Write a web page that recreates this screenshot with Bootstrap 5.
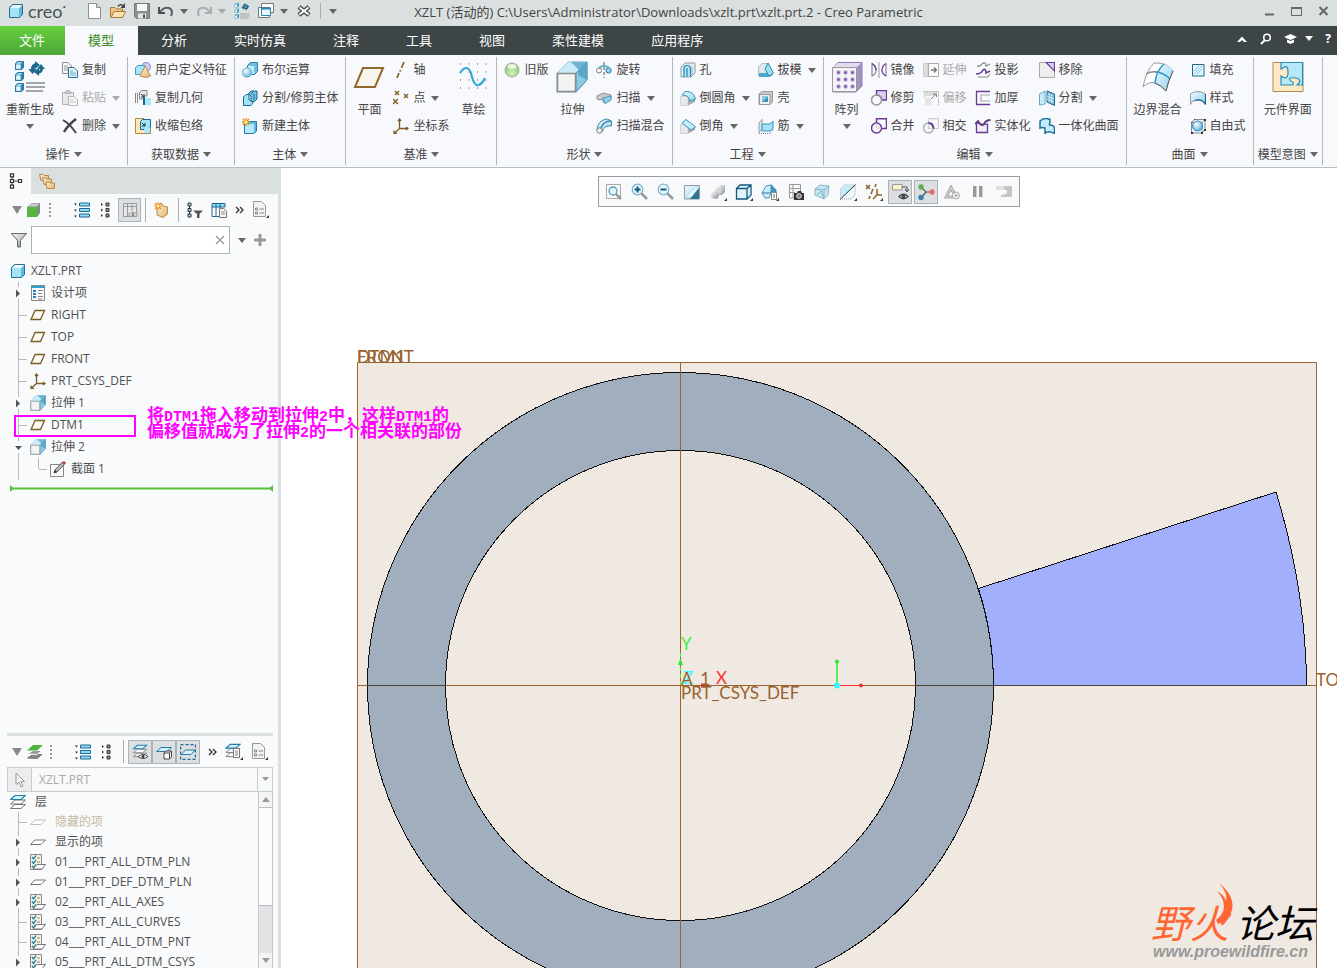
<!DOCTYPE html>
<html lang="zh-CN">
<head>
<meta charset="utf-8">
<meta name="viewport" content="width=device-width, initial-scale=1">
<title>XZLT - Creo Parametric</title>
<link rel="stylesheet" href="https://cdn.jsdelivr.net/npm/bootstrap@5.3.0/dist/css/bootstrap.min.css">
<style>
body{font-family:"Open Sans","Noto Sans CJK SC",sans-serif;font-size:12px;line-height:16px;color:#444;background:#fff}
button,input,select{font:inherit;color:inherit}
svg{display:block;flex:none}
.iconset{position:absolute;width:0;height:0}
.i16{width:16px;height:16px}
.i32{width:32px;height:32px}
.tb{display:flex;align-items:center;padding:0;border:0;border-radius:0;background:none;font-size:12px;line-height:16px;color:#444;white-space:nowrap}
.tb:disabled{opacity:1;color:#aaa;border:0}
.cr{width:0;height:0;border:4px solid transparent;border-top:5px solid #666;border-bottom:0;flex:none}
.tb:disabled .cr{border-top-color:#aaa}
/* title bar */
.titlebar{height:26px;background:#dadfdf;position:relative}
.titlebar h1{font-size:13px;line-height:25px;margin:0;color:#444;font-weight:400}
.caption-text{left:0;right:0;top:0;pointer-events:none}
.logo{font-family:Lato,sans-serif;font-size:18px;line-height:20px;color:#4a5152;margin-right:20px}
.quick{gap:8px}
.quick .tb{gap:6px}
.vsep{width:1px;background:#aab0b0}
/* tabs */
.tabs{height:29px;background:#3d4546}
.tabs .tabbtn{border:0;border-radius:0;background:none;color:#fff;font-size:13px;line-height:29px;padding:0 24px 0 23px;white-space:nowrap}
.tabs .filetab{background:linear-gradient(#66cf3f,#4fa839);padding:0 20px 0 19px}
.tabs .current{background:#f8f9fc;color:#3d8b28}
.tabs .cr{border-top-color:#fff}
.tabtools{padding:0 6px 4px 0}
/* ribbon */
.ribbon{height:113px;background:#f8f9fc;border-bottom:1px solid #b4bfbf;padding:2px 0}
.rgroup{border-right:1px solid #b3b8bb;display:flex;flex-direction:column;justify-content:space-between}
.rgroup .cols{display:flex;gap:8px;padding:0 7px}
.rgroup:first-child .cols{padding-left:6px}
.rcol{display:flex;flex-direction:column}
.rcol .tb{height:28px;gap:4px;padding-bottom:2px}
.rcol .tb .cr{margin-left:2px}
.big{flex-direction:column;padding-top:4px;gap:2px;height:84px;justify-content:flex-start}
.big .lbl{line-height:18px;margin-top:6px;padding:0}
.big .cr{margin-top:3px}
.glabel{justify-content:center;gap:4px;height:21px}
/* left panel */
.side{width:281px;background:#f8fafc;border-right:3px solid #dadfdf;flex:none}
.sidetabs{height:26px;background:#dadfdf}
.sidetabs .on{background:#f8fafc}
.sidetabs .tb{width:31px;justify-content:center}
.tools{height:32px}
.tools .tb{height:24px}
.on24{width:24px;justify-content:center;background:#dcdfe1;border:1px solid #aeb2b4}
.findbox{width:199px;height:28px;border:1px solid #a9b5b5;background:#fff}
.findbox input{border:0;outline:0;min-width:0;background:none;padding:0 4px}
.tree{list-style:none;margin:0;padding:0;color:#505050}
.modeltree{padding-top:6px}
.tree li{display:flex;align-items:center;height:22px;padding-left:14px;position:relative;white-space:nowrap}
.tree.short li{height:20px}
.tree .top{padding-left:10px}
.tree .txt{margin-left:5px}
.tree.short .txt{margin-left:9px}
.tree .hid{color:#c4baa0}
.gd{width:16px;align-self:stretch;flex:none;position:relative;background:linear-gradient(#b8b8b8,#b8b8b8) 4px 0/1px 100% no-repeat}
.gd.st{background:linear-gradient(#b8b8b8,#b8b8b8) 4px 0/1px 100% no-repeat,linear-gradient(#b8b8b8,#b8b8b8) 5px 50%/8px 1px no-repeat}
.gd.half{background:linear-gradient(#b8b8b8,#b8b8b8) 4px 0/1px 50% no-repeat,linear-gradient(#b8b8b8,#b8b8b8) 5px 50%/8px 1px no-repeat}
.gd svg{position:absolute;left:0;top:50%;margin-top:-6px;background:#f8fafc;width:10px;height:12px}
.pick{position:absolute;left:14px;top:1px;width:122px;height:22px;border:2px solid #f0f}
.tree li.insert{height:7px;margin:5px 5px 0 10px;padding:0}
.insert svg{width:100%;height:7px}
.layers{height:235px;border-top:3px solid #dadfdf;margin:0 5px 0 7px;flex:none}
.combo{height:25px;border:1px solid #c9cccf;color:#aaa;background:#f8f9fa}
.combo .arrow{width:24px;background:#ebedee;border-right:1px solid #c9cccf}
.combo select{appearance:none;border:0;background:none;color:#aaa;opacity:1;padding:0 7px}
.combo .drop{width:15px;border-left:1px solid #c9cccf}
.layerlist{min-height:0;margin-left:-7px}
.sbar{width:15px;background:#e1e3e5;border:1px solid #c5c8ca;border-top:0;border-bottom:0}
.sbar .end{height:15px;background:#f3f5f6}
.thumb{height:99px;background:#fbfcfd;border:1px solid #b8bcbe;border-width:1px 0}
/* graphics */
.work{min-height:0}
.viewbar{top:8px;left:50%;transform:translateX(-50%);background:#f7f9fb;border:1px solid #999ca0;padding:3px 2px;height:31px}
.viewbar .tb{width:24px;height:24px;margin:0 1px;justify-content:center}
.viewbar .on24{background:#dcdfe1;border:1px solid #aeb2b4}
.note{left:147px;top:238px;color:#f0f;font:bold 17px/16px "Noto Sans CJK SC",sans-serif;white-space:nowrap}
.note div{height:16px}
.note span{font-family:"Liberation Mono",monospace;font-size:15px;line-height:14px}
.model text{font-family:Lato,"Liberation Sans",sans-serif;font-size:17px}
.model .mark-cn{font:italic 400 39px "Noto Sans CJK SC",sans-serif}
.model .mark-url{font:italic bold 16px "Liberation Sans",sans-serif}
</style>
</head>
<body class="vh-100 overflow-hidden d-flex flex-column">
<svg class="iconset" aria-hidden="true">
<defs>
<linearGradient id="gb" x1="0" y1="0" x2="1" y2="1"><stop offset="0" stop-color="#effaff"/><stop offset="1" stop-color="#8fd3ee"/></linearGradient>
<linearGradient id="gy" x1="0" y1="0" x2="1" y2="1"><stop offset="0" stop-color="#fff2d8"/><stop offset="1" stop-color="#e0b468"/></linearGradient>
<linearGradient id="gg" x1="0" y1="0" x2="1" y2="1"><stop offset="0" stop-color="#fff"/><stop offset="1" stop-color="#8a8e92"/></linearGradient>
<radialGradient id="gs" cx=".5" cy=".75" r=".7"><stop offset="0" stop-color="#d4f5bf"/><stop offset="1" stop-color="#86bd68"/></radialGradient>
<radialGradient id="gbs" cx=".4" cy=".35" r=".65"><stop offset="0" stop-color="#fff"/><stop offset="1" stop-color="#5db4da"/></radialGradient>
</defs>
<symbol id="cube" viewBox="0 0 16 16"><path d="M1.500 4.500L4.500 1.500H14.500V11.500L11.500 14.500H1.500Z" fill="#5fb9de" stroke="#2a6f92"/><path d="M2 5L5 2H14L11.500 5Z" fill="#e9f8fe"/><path d="M2 5H11V14H2Z" fill="#a5e3f8"/></symbol>
<symbol id="minicube" viewBox="0 0 8 8"><path d="M.5 2.500L2.500.5H7.500V5.500L5.500 7.500H.5Z" fill="#2a86b4" stroke="#2a7ba5"/><path d="M1 3H5V7H1Z" fill="#e4f6fd"/><path d="M1 2.500L2.500 1H6.500L5 2.500Z" fill="#c6ecfb"/></symbol>
<symbol id="newf" viewBox="0 0 16 16"><path d="M2.500.5H10.500L14.500 4.500V15.500H2.500Z" fill="#fff" stroke="#8b8f92"/><path d="M10.500.5V4.500H14.500" fill="#ddd" stroke="#8b8f92"/></symbol>
<symbol id="open" viewBox="0 0 16 16"><path d="M.5 13.500V4.500H5L6.500 6H12.500V14.500H1.500Z" fill="#eec786" stroke="#a97a35"/><path d="M1 14.500L4 8.500H15.500L12.500 14.500Z" fill="#ffe3ae" stroke="#a97a35"/><path d="M8 3.500Q10 .5 13 2.500" fill="none" stroke="#444" stroke-width="1.500"/><path d="M15 0V5H10.500Z" fill="#444"/></symbol>
<symbol id="save" viewBox="0 0 16 16"><path d="M.5.5H15.500V15.500H2.500L.5 13.500Z" fill="#8c9093" stroke="#777"/><path d="M3 1H13V8H3Z" fill="#f7f7f7"/><path d="M4 10.500H12V15.500H4Z" fill="#e4e6e8"/><path d="M9 11.500H11V15H9Z" fill="#555"/></symbol>
<symbol id="undo" viewBox="0 0 16 16"><path d="M1 4V10H7" fill="none" stroke="#4b4f52" stroke-width="2"/><path d="M2 9Q6 3.500 11 5Q15.500 7 13 13" fill="none" stroke="#5c6063" stroke-width="2"/></symbol>
<symbol id="redo" viewBox="0 0 16 16"><path d="M15 4V10H9" fill="none" stroke="#a9adaf" stroke-width="2"/><path d="M14 9Q10 3.500 5 5Q.5 7 3 13" fill="none" stroke="#a9adaf" stroke-width="2"/></symbol>
<symbol id="regen" viewBox="0 0 32 32"><use href="#minicube" x="1" y="0" width="9" height="9"/><use href="#minicube" x="1" y="11" width="9" height="9"/><use href="#minicube" x="1" y="22" width="9" height="9"/><path d="M12 22H31M12 26H31M12 30H29" stroke="#a3a6a8" stroke-width="2"/><path d="M14.500 8H23L18.500 13ZM17 8Q17 3 22 2V5Q20.500 6 20.500 8Z" fill="#1d698e"/><path d="M21 0L26 4L21 8Z" fill="#1d698e"/><path d="M23 8H31L27 3ZM29 8Q29 12 24 13V10Q26 10 26 8Z" fill="#1d698e"/><path d="M25 7V15L20 11Z" fill="#1d698e"/></symbol>
<symbol id="wins" viewBox="0 0 16 16"><path d="M3.500.5H15.500V9.500H3.500Z" fill="#fff" stroke="#777"/><path d="M.5 4.500H11.500V14.500H.5Z" fill="#f5fbfe" stroke="#777"/><path d="M3.500 5.500H12.500V12.500H3.500Z" fill="#e6f6fd" stroke="#2e85ad"/><path d="M3 5.500H13" stroke="#2e85ad" stroke-width="2"/></symbol>
<symbol id="closew" viewBox="0 0 16 16"><path d="M3 4L13 12M13 4L3 12" stroke="#444" stroke-width="4.500"/><path d="M3.500 4.500L12.500 11.500M12.500 4.500L3.500 11.500" stroke="#fff" stroke-width="2"/></symbol>
<symbol id="copy" viewBox="0 0 16 16"><path d="M.5.500H6L9.500 4V11.500H.5Z" fill="#f7f7f7" stroke="#8c8c8c"/><path d="M2 4H6M2 6H6M2 8H6" stroke="#999"/><path d="M6.500 5.500H12L15.500 9V15.500H6.500Z" fill="#e6f6fd" stroke="#2a6f92"/><path d="M8 9H11M8 11H14M8 13H14" stroke="#6ba9c6"/></symbol>
<symbol id="paste" viewBox="0 0 16 16"><path d="M.5 2.500H11.500V14.500H.5Z" fill="#e8e8e8" stroke="#b5b5b5"/><path d="M3 3.500Q3 .5 6 .5T9 3.500Z" fill="#ccc" stroke="#b5b5b5"/><path d="M6.500 6.500H12L15.500 10V15.500H6.500Z" fill="#f8f8f8" stroke="#b5b5b5"/><path d="M8 10H11M8 12H14" stroke="#c4c4c4"/></symbol>
<symbol id="del" viewBox="0 0 16 16"><path d="M1 2Q8 6 14 15" fill="none" stroke="#444" stroke-width="2"/><path d="M14 1Q6 7 2 14" fill="none" stroke="#444" stroke-width="2.500"/></symbol>
<symbol id="udf" viewBox="0 0 16 16"><circle cx="11" cy="5" r="4.500" fill="#c9cff2" stroke="#7d88c9"/><path d="M.5 5.500L2.500 3.500H9.500V10.500L7.500 12.500H.5Z" fill="#a5e3f8" stroke="#4b9bc0"/><path d="M10 4L15.500 14Q11 17 5 14Z" fill="url(#gy)" stroke="#b98f50"/></symbol>
<symbol id="cpgeo" viewBox="0 0 16 16"><path d="M.5 3V13M2.500 3V13" stroke="#888"/><path d="M4.500 3L6.500.5H12V6H9V9H4.500Z" fill="#e8e8e8" stroke="#888"/><path d="M6 4L9 7M9 4V7H6" fill="none" stroke="#333"/><path d="M8 7H10V15H8Z" fill="#1d698e"/><path d="M10 8H16V15H10Z" fill="#a5e9fb"/></symbol>
<symbol id="shrink" viewBox="0 0 16 16"><path d="M.5.500H9V10H15.500V15.500H.5Z" fill="#ffe7b8" stroke="#b08a4a"/><path d="M5.500 3.500L7.500 1.500H15.500V9L13.500 11.500H5.500Z" fill="#a5e3f8" stroke="#1d698e"/><path d="M7 5L10 8M10 5V8H7" fill="none" stroke="#222"/><path d="M9 10H15V15H9Z" fill="#a5e9fb"/></symbol>
<symbol id="boolb" viewBox="0 0 16 16"><path d="M5.500 3.500L8.500.5H15.500V9.500L12.500 12.500H5.500Z" fill="#6fc1e2" stroke="#2a7ba5"/><path d="M6 4H12V12H6Z" fill="#c6edfb"/><circle cx="5" cy="10.500" r="4.800" fill="url(#gbs)" stroke="#7fb3cc"/></symbol>
<symbol id="split" viewBox="0 0 16 16"><path d="M1.500 7L4 4.500H7V10H11V13L9 15.500H1.500Z" fill="#a5e3f8" stroke="#1d698e"/><path d="M6.500 3.500L9 1H15V9L12.500 11.500H9V6Z" fill="#71c4e6" stroke="#1d698e"/><path d="M9 4L11 2M12 4V10" stroke="#1d698e"/></symbol>
<symbol id="nbody" viewBox="0 0 16 16"><path d="M2.500 5.500L5 3.500H14.500V13L12 15.500H2.500Z" fill="#5fb9de" stroke="#2a7ba5"/><path d="M3 6H12V15H3Z" fill="#b4ebfb"/><path d="M4 0V8M0 4H8M1 1L7 7M7 1L1 7" stroke="#e88b1a" stroke-width="1.300"/><circle cx="4" cy="4" r="1.700" fill="#fff3a8"/></symbol>
<symbol id="plane32" viewBox="0 0 32 32"><path d="M10 7H30L22 26H2Z" fill="#f8f5ef" stroke="#92692a" stroke-width="2"/></symbol>
<symbol id="axis" viewBox="0 0 16 16"><path d="M11 0L8.500 6M7.500 8L7 9.500M6 11L4 16" stroke="#8c682c" stroke-width="1.800"/></symbol>
<symbol id="point" viewBox="0 0 16 16"><path d="M2 1L6 5M6 1L2 5M11 4L15 8M15 4L11 8M0 9L5 14M5 9L0 14" stroke="#8c682c" stroke-width="1.600"/></symbol>
<symbol id="csys" viewBox="0 0 16 16"><path d="M6.500 1V10.500H15M6.500 10.500L1.500 15M5 3L6.500 1L8 3M13 9L15 10.500L13 12M1 12.500V15.500H4" fill="none" stroke="#7c5c26" stroke-width="1.300"/></symbol>
<symbol id="sketch32" viewBox="0 0 32 32"><path d="M3 3H30M3 11H30M3 19H30M3 27H30" stroke="#555" stroke-dasharray="1 7.500"/><path d="M3 12Q10 2 14 12Q17 26 22 24Q26 22 28 17" fill="none" stroke="#35a9dc" stroke-width="2.200"/></symbol>
<symbol id="legacy" viewBox="0 0 16 16"><circle cx="8" cy="8" r="7" fill="url(#gs)" stroke="#a9ada6"/><ellipse cx="8" cy="4.500" rx="4.500" ry="2.500" fill="#eaf8e2"/></symbol>
<symbol id="extr" viewBox="0 0 32 32"><path d="M1 12L12 1H31V19L20 31H1Z" fill="#b6e4f5" stroke="#77aabf"/><path d="M12 1H31V19H20V12H12Z" fill="#5ca6c8"/><path d="M12 1H31L20 12H1Z" fill="#c8ebf8"/><path d="M15 1H31L23 9Z" fill="#6db3d2"/><path d="M20 12L31 1V19L20 31Z" fill="#8ccbe4" stroke="#4f97b8"/><path d="M31 1V19L22 14V10Z" fill="#5ca6c8"/><path d="M1.500 12.500H19.500V30.500H1.500Z" fill="#f3f3f3" stroke="#8c8c8c" stroke-width="1.500"/></symbol>
<symbol id="revolve" viewBox="0 0 16 16"><path d="M8 0V16" stroke="#555" stroke-dasharray="3 2"/><circle cx="3" cy="8.500" r="2.500" fill="#fff" stroke="#777"/><circle cx="12.500" cy="8.500" r="2.700" fill="#8fd3ee" stroke="#2a7ba5"/><path d="M3 5.500Q8 2.500 13 5.500" fill="none" stroke="#5faecb" stroke-width="2"/></symbol>
<symbol id="sweep" viewBox="0 0 16 16"><path d="M1 6L7 3L15 5V9L9 13L7 12V9L3 10L1 9Z" fill="#c6cacd" stroke="#8c8f92"/><path d="M7 8L15 6V10L9 13.500Z" fill="#8fd3ee" stroke="#4f97b8"/></symbol>
<symbol id="swbl" viewBox="0 0 16 16"><path d="M1 12Q2 2 11 1L15.500 3V8Q8 7 6 14Z" fill="url(#gb)" stroke="#3f88a8"/><path d="M5 10Q7 3 15 3" fill="none" stroke="#3f88a8" stroke-width="1.500"/><circle cx="3.500" cy="12.500" r="2.700" fill="#f3f3f3" stroke="#777"/></symbol>
<symbol id="hole" viewBox="0 0 16 16"><path d="M1 5L5 1H15V11L11 15H1Z" fill="#e4eef2" stroke="#999"/><path d="M4 15V6Q4 3.500 7 3.500T10.500 6V15M7 6V15" fill="#b5e4f5" stroke="#2387b5" stroke-width="1.200"/><path d="M12 5V13" stroke="#8ab9cf"/></symbol>
<symbol id="round" viewBox="0 0 16 16"><path d="M.5 6.500H8V15.500H.5Z" fill="#e9e9e9" stroke="#d2d2d2"/><path d="M8 15.500V6.500L15 8V12Z" fill="#a9aeb2"/><path d="M5 1.500Q14 1 15.500 9L10 11Q9 5 2 5Z" fill="url(#gb)" stroke="#3793ba"/></symbol>
<symbol id="chamfer" viewBox="0 0 16 16"><path d="M.5 6.500H8V15.500H.5Z" fill="#e9e9e9" stroke="#d2d2d2"/><path d="M8 15.500V8L15 9V12Z" fill="#a9aeb2"/><path d="M6 1.500L15.500 9L11 12L2 5Z" fill="#c5effb" stroke="#3793ba"/></symbol>
<symbol id="draft" viewBox="0 0 16 16"><path d="M.5 5L4 1.500H10L15 12L11 14H.5Z" fill="#dfe8ec" stroke="#b5bfc3"/><path d="M1 11H11L15 13L11 15H1Z" fill="#4aa7d0"/><path d="M10 1L15.500 11L11 14L7 7Z" fill="#9edcf2" stroke="#2a8ab5"/></symbol>
<symbol id="shell" viewBox="0 0 16 16"><path d="M1 4L4 1.500H14.500V12L12 14.500H1Z" fill="#c6cacc" stroke="#999"/><path d="M1.500 4.500H12V14.500H1.500Z" fill="#eee" stroke="#999"/><path d="M4 6.500H10V12H4Z" fill="#3f93bd"/><path d="M4 6.500H10L4 12Z" fill="#85cbe8"/></symbol>
<symbol id="rib" viewBox="0 0 16 16"><path d="M1 5L4 1.500V11L1 14.500Z" fill="#dbeef5" stroke="#999"/><path d="M4 6L12 6L15 3V11L12 13H4Z" fill="#a5e3f8" stroke="#3793ba"/><path d="M1 15.500H12L15 12" fill="none" stroke="#888" stroke-dasharray="1 1"/></symbol>
<symbol id="patt" viewBox="0 0 32 32"><path d="M2 7L7 1.500H31V25L25 31H2Z" fill="#a592c4" stroke="#8c7ab0"/><path d="M3 6L7 2H30L26 6Z" fill="#e3dcf0"/><path d="M1.500 6.500H25.500V30.500H1.500Z" fill="#f4f3f7" stroke="#999"/><path d="M6 10h3v3h-3zM13 10h3v3h-3zM20 10h3v3h-3zM6 17h3v3h-3zM13 17h3v3h-3zM20 17h3v3h-3zM6 24h3v3h-3zM13 24h3v3h-3zM20 24h3v3h-3z" fill="#6b429a" stroke="#b9a6d3"/></symbol>
<symbol id="mirror" viewBox="0 0 16 16"><path d="M1 14.500V1.500Q5 4 5 8T1 14M15 14.500V1.500" fill="none" stroke="#8a8494" stroke-width="1.200"/><path d="M15 1.500Q11 4 11 8T15 14" fill="none" stroke="#693b94" stroke-width="1.300"/><path d="M1 1.500Q5 4 5 8" fill="none" stroke="#693b94" stroke-width="1.300"/><path d="M8 0V16" stroke="#999"/></symbol>
<symbol id="trim" viewBox="0 0 16 16"><path d="M5.500.5H15.500V10H11Q10 5 5.500 5Z" fill="#dccff2" stroke="#693b94" stroke-width="1.300"/><circle cx="5.500" cy="10" r="5" fill="none" stroke="#999" stroke-width="1.500"/></symbol>
<symbol id="merge" viewBox="0 0 16 16"><path d="M5.500 5V.7H15.500V10.500H10.500" fill="none" stroke="#693b94" stroke-width="1.500"/><circle cx="5.500" cy="10" r="5" fill="none" stroke="#693b94" stroke-width="1.500"/><path d="M5.500 5V10H10.500" fill="none" stroke="#ccc"/></symbol>
<symbol id="inter" viewBox="0 0 16 16"><path d="M5.500.7H15.500V10.500H10.500M5.500.7V10.500H10.500" fill="none" stroke="#ccc" stroke-width="1.200"/><circle cx="5.500" cy="10" r="5" fill="none" stroke="#aaa" stroke-width="1.300"/><path d="M5.500 5Q10 5 10.500 10.500" fill="none" stroke="#693b94" stroke-width="2"/></symbol>
<symbol id="extend" viewBox="0 0 16 16"><path d="M.5 1.500H5V14.500H.5Z" fill="#ddd" stroke="#ccc"/><path d="M5.500 1.500H15.500V14.500H5.500Z" fill="#fafafa" stroke="#aaa"/><path d="M8 8H13M11 5.500L13.500 8L11 10.500" fill="none" stroke="#777" stroke-width="1.300"/></symbol>
<symbol id="offs" viewBox="0 0 16 16"><path d="M.5 1.500H15.500V15" fill="none" stroke="#aaa" stroke-dasharray="2 1"/><path d="M.5 2H14V6H4L.5 8Z" fill="#ddd"/><path d="M2 8H8V15.500H2Z" fill="#e4e4e4"/><path d="M8 9L13 4M10 4H13.500V7" fill="none" stroke="#888"/></symbol>
<symbol id="proj" viewBox="0 0 16 16"><path d="M2 4Q5 5 7 2Q11-1 11 4L15 2" fill="none" stroke="#888" stroke-width="1.300"/><path d="M1 12Q6 12 8 8Q11 6 11 11L15 9" fill="none" stroke="#693b94" stroke-width="1.600"/><path d="M3 15H13L15 12" fill="none" stroke="#888"/></symbol>
<symbol id="thick" viewBox="0 0 16 16"><path d="M15 1.500H1.500V14.500H15" fill="none" stroke="#693b94" stroke-width="1.300"/><path d="M15 5H6V11H15" fill="none" stroke="#aaa" stroke-width="1.200"/></symbol>
<symbol id="solid" viewBox="0 0 16 16"><path d="M1.500 6V14.500H12.500V6Q6 8 3 4Z" fill="#f0ebf8" stroke="#693b94" stroke-width="1.300"/><path d="M0 6L3 3Q6 9 9 6Q11 2 15.500 2" fill="none" stroke="#5a3d80" stroke-width="1.800"/></symbol>
<symbol id="remv" viewBox="0 0 16 16"><path d="M.5.5H15.500V15.500H.5Z" fill="#eee" stroke="#aaa"/><path d="M7 .5H15.500V9Z" fill="#ddccf3" stroke="#693b94" stroke-width="1.200"/></symbol>
<symbol id="divd" viewBox="0 0 16 16"><path d="M.5 4L6 1V14L.5 15Z" fill="#c5ecfa" stroke="#6aa8c2"/><path d="M8 1L15.500 4V15.500L8 12Z" fill="#7fc2dd" stroke="#1d698e"/><path d="M10 4V12M12.500 5V13M8 6L15 9M8 9L15 12" stroke="#fff" stroke-dasharray="1 1"/></symbol>
<symbol id="unify" viewBox="0 0 16 16"><path d="M1 3Q5-1 11 1.500L10.500 7Q15 7 15.500 10V15.500Q9 12 6 15.500V10Q3 9 1 10Z" fill="#c5ecfa" stroke="#1f6f98" stroke-width="1.500"/></symbol>
<symbol id="bound" viewBox="0 0 32 32"><path d="M12 2Q4 10 1 26Q7 20 13 22Q19 24 24 30Q26 20 31 10Q25 1 12 2Z" fill="#fff" stroke="#999"/><path d="M22 3Q14 10 13 22Q19 24 24 30Q26 20 31 10Q28 5 22 3Z" fill="url(#gb)"/><path d="M22 3Q14 10 13 22M13 11Q21 11 28 18" fill="none" stroke="#2c99c9" stroke-width="1.600"/><path d="M13 22Q19 24 24 30Q26 20 31 10" fill="none" stroke="#555"/><path d="M4 13Q9 10 16 11" fill="none" stroke="#888" stroke-width="1.300"/></symbol>
<symbol id="fillp" viewBox="0 0 16 16"><path d="M2.500 2.500H14V14H2.500Z" fill="#dff4fc" stroke="#1d698e"/><path d="M4 9L9 4M4 12L12 4M7 12L12 7" stroke="#8cc9e4"/></symbol>
<symbol id="style" viewBox="0 0 16 16"><path d="M.5 4Q8-1 15.500 4V14.500Q14 10 8 10T.5 14.500Z" fill="url(#gb)" stroke="#999"/><path d="M4.500 10.500Q12 8 15.500 14.500V4" fill="none" stroke="#1d698e" stroke-width="1.300"/></symbol>
<symbol id="free" viewBox="0 0 16 16"><path d="M1.500 4.500H12V15H1.500ZM4.500 1.500H15V11.500L12 15M4.500 1.500L1.500 4.500M15 1.500L12 4.500" fill="none" stroke="#888"/><circle cx="7.500" cy="8" r="5" fill="url(#gbs)" stroke="#2a8ab5"/><path d="M1 4h1v1H1zM4 1h1v1H4zM14 1h2v2h-2zM14 11h2v2h-2zM1 14h2v2H1zM11 14h2v2h-2z" fill="#333"/></symbol>
<symbol id="comp" viewBox="0 0 32 32"><path d="M1 1.500H31V30.500H1Z" fill="#fde9c4" stroke="#b48a4e"/><path d="M9 1.500H30.500V24H25Q31 19 24 17Q16 16 18 19Q18 20 21 21V24H9V15Q16 20 16 11Q16 3 11 7L9 8Z" fill="#b6e8f8" stroke="#2d8fb8" stroke-width="1.200"/></symbol>
<!-- side panel icons -->
<symbol id="ttree" viewBox="0 0 16 16"><path d="M4 2V14M4 8H12" stroke="#444"/><path d="M2.500.8h3v3h-3zM2.500 6.500h3v3h-3zM2.500 12.200h3v3h-3zM10.500 6.500h3v3h-3z" fill="#fff" stroke="#333" stroke-width="1.200"/></symbol>
<symbol id="folders" viewBox="0 0 16 16"><g fill="url(#gy)" stroke="#b58b4e"><path d="M.5 1.500H4L5 2.500H9.500V7.500H2Z"/><path d="M3.500 5H7L8 6H12.500V11.500H5Z"/><path d="M7 9H10L11 10H15.500V15.500H8Z"/></g></symbol>
<symbol id="gcube" viewBox="0 0 16 16"><path d="M1 5L6 1H14V11L11 15H1Z" fill="#848b8e"/><path d="M1.500 5H11V15H1.500Z" fill="#55b83a"/><path d="M2 4.500L6 1.500H13.500L11 4.500Z" fill="#c9ccce"/></symbol>
<symbol id="lst" viewBox="0 0 16 16"><path d="M0 1.500H3L1.500 3.500ZM0 7.500H3L1.500 9.500ZM0 13.500H3L1.500 15.500Z" fill="#333"/><path d="M5.500 1h10v3h-10zM5.500 6.500h10v3h-10zM5.500 12h10v3h-10z" fill="#8fdcf8" stroke="#1d698e"/></symbol>
<symbol id="lst2" viewBox="0 0 16 16"><path d="M3 1L5 2.500L3 4ZM3 6.500L5 8L3 9.500ZM3 12L5 13.500L3 15Z" fill="#333"/><path d="M8 1h3v3H8zM8 6.500h3v3H8zM8 12h3v3H8z" fill="#999" stroke="#333"/></symbol>
<symbol id="dots" viewBox="0 0 4 16"><path d="M2 1V3M2 5V7M2 9V11M2 13V15" stroke="#999" stroke-width="2"/></symbol>
<symbol id="tcols" viewBox="0 0 16 16"><path d="M1.500 1.500H14.500V14.500H1.500ZM1.500 4.500H14.500M5.500 1.500V14.500M10 1.500V9" fill="#e4e6e8" stroke="#999"/><path d="M6 12.500Q11 8.500 16 12.500Q11 16.500 6 12.500Z" fill="#f3f3f3" stroke="#999"/><circle cx="11" cy="12.500" r="1.500" fill="#888"/></symbol>
<symbol id="newd" viewBox="0 0 16 16"><path d="M3 3L8 1.500L9 4L13.500 5V12L9 15.500L3 13Z" fill="url(#gy)" stroke="#b98c45"/><path d="M4 0V8M0 4H8M1 1L7 7M7 1L1 7" stroke="#e88b1a" stroke-width="1.200"/><circle cx="4" cy="4" r="1.500" fill="#fff3a8"/></symbol>
<symbol id="tfil" viewBox="0 0 16 16"><path d="M2.500 2V15" stroke="#333"/><path d="M1 1h3v3H1zM1 6.500h3v3H1zM1 12h3v3H1z" fill="#8fdcf8" stroke="#333"/><path d="M6 8.500H16L12.500 12V16H10V12Z" fill="#555"/></symbol>
<symbol id="tset" viewBox="0 0 16 16"><path d="M1 1.500H14V5H1Z" fill="#8fdcf8" stroke="#1d698e"/><path d="M1 5V14.500H8M5 1.500V14.500M9 1.500V6" fill="none" stroke="#1d698e"/><path d="M8.500 6.500H12.500L15.500 9V15.500H8.500Z" fill="#f5f5f5" stroke="#777"/><path d="M10 10H14M10 12H14" stroke="#888"/></symbol>
<symbol id="docl" viewBox="0 0 18 18"><path d="M1.500.5H9.500L13.500 4.500V15.500H1.500Z" fill="#f1f2f3" stroke="#999"/><path d="M3.500 7h2v2h-2zM3.500 11h2v2h-2zM7.500 8H12M7.500 12H12" fill="none" stroke="#888"/><path d="M17 14V17H14Z" fill="#333"/></symbol>
<symbol id="funnel" viewBox="0 0 16 16"><path d="M.5 1.500H15.500L9.500 8.500V15H6.500V8.500Z" fill="url(#gg)" stroke="#666"/></symbol>
<symbol id="ditem" viewBox="0 0 16 16"><path d="M1.500.5H14.500V15.500H1.500Z" fill="#f8f8f8" stroke="#888"/><path d="M1 2H15" stroke="#2aa0d0" stroke-width="2"/><path d="M3 5h3v2H3zM3 8h3v2H3zM3 11h3v2H3z" fill="#2387b5"/><path d="M8 5.500H13M8 8.500H12M8 11.500H13M8 14H12" stroke="#888"/></symbol>
<symbol id="pl" viewBox="0 0 16 16"><path d="M5 3.500H14.500L10.500 12.500H1Z" fill="#fdfaf4" stroke="#7c5c26" stroke-width="1.300"/></symbol>
<symbol id="sec" viewBox="0 0 16 16"><path d="M.5 3.500H13.500V15.500H.5Z" fill="#fafafa" stroke="#888"/><path d="M4 12L5 9L12 1.500L14 3.500L7 11Z" fill="#bbb" stroke="#555"/><path d="M12 1.500L14 0L16 2L14.500 3.500Z" fill="#c0362a"/><path d="M4 12L5 9L7 11Z" fill="#333"/></symbol>
<symbol id="ex" viewBox="0 0 10 12"><path d="M2 2.500L6 6.500L2 10.500Z" fill="#555"/></symbol>
<symbol id="exd" viewBox="0 0 10 12"><path d="M1 5H8L4.500 9Z" fill="#555"/></symbol>
<symbol id="glay" viewBox="0 0 16 16"><path d="M.5 14L6 10.500H15L10 14.500Z" fill="#888" stroke="#777"/><path d="M.5 10L6 6.500H15L10 10.500Z" fill="#999" stroke="#f8fafc"/><path d="M0 6.500L6 1H16L10 6.500Z" fill="#4fb536"/></symbol>
<symbol id="lay" viewBox="0 0 16 16"><path d="M.5 14.500L5 10.500H15.500L11 14.500Z" fill="#fff" stroke="#777"/><path d="M.5 10L5 6H15.500L11 10Z" fill="#fff" stroke="#777"/><path d="M.5 5.500L5 1.500H15.500L11 5.500Z" fill="#d8f1fb" stroke="#2380aa" stroke-width="1.200"/></symbol>
<symbol id="layeye" viewBox="0 0 16 16"><use href="#lay" width="16" height="14"/><path d="M6 12.500Q11 8.500 16 12.500Q11 16.500 6 12.500Z" fill="#fff" stroke="#444"/><circle cx="11" cy="12.500" r="1.500" fill="#333"/></symbol>
<symbol id="laycube" viewBox="0 0 16 16"><path d="M.5 7.500L5 3.500H15.500L11 7.500Z" fill="#d8f1fb" stroke="#2380aa"/><path d="M8 9L10 7H15.500V13L13.500 15H8ZM8 9H13.500V15M13.500 9L15.500 7" fill="#fff" stroke="#444"/></symbol>
<symbol id="layiso" viewBox="0 0 16 16"><path d="M.5.5H15.500V15.500H.5Z" fill="none" stroke="#1d698e" stroke-width="1.300" stroke-dasharray="3 2"/><path d="M1 10.500L5.500 6H15L11 10.500Z" fill="#d8f1fb" stroke="#2380aa"/></symbol>
<symbol id="layset" viewBox="0 0 18 18"><use href="#lay" width="16" height="15"/><path d="M8.500 5.500H14.500V14.500H8.500Z" fill="#fff" stroke="#777"/><path d="M10 8H13M10 10H13M10 12H13" stroke="#888"/><path d="M18 14V17H15Z" fill="#333"/></symbol>
<symbol id="lp" viewBox="0 0 16 16"><path d="M.5 10.500L5 6H15.500L11 10.500Z" fill="#fff" stroke="#777"/></symbol>
<symbol id="lph" viewBox="0 0 16 16"><path d="M.5 10.500L5 6H15.500L11 10.500Z" fill="#fff" stroke="#c4c0b4"/></symbol>
<symbol id="lc" viewBox="0 0 16 16"><path d="M.5.5H11.500V15.500H.5Z" fill="#fbf3dd" stroke="#888"/><path d="M2 3L3.500 5L6 1.500M2 7.500L3.500 9.500L6 6M2 12L3.500 14L6 10.500" fill="none" stroke="#2380aa" stroke-width="1.300"/><path d="M7 4H10M7 8H10" stroke="#888"/><path d="M3 15L7 10.500H15.500L12 15Z" fill="#fff" stroke="#777"/></symbol>
<symbol id="arr" viewBox="0 0 16 16"><path d="M4 1V12.500L7 10L9 15L11 14L9 9.500H12.500Z" fill="#f5f5f5" stroke="#999"/></symbol>
<!-- view toolbar icons -->
<symbol id="zfit" viewBox="0 0 18 18"><path d="M1.500 1.500H15.500V15.500H1.500Z" fill="#fafafa" stroke="#aaa"/><path d="M11 11L16 16" stroke="#999" stroke-width="2.500"/><circle cx="8" cy="8" r="4" fill="#dff3fb" stroke="#5a9cba" stroke-width="1.300"/></symbol>
<symbol id="zin" viewBox="0 0 18 18"><path d="M10 10L16 16" stroke="#999" stroke-width="2.500"/><circle cx="6.500" cy="6.500" r="5.300" fill="#e8f7fd" stroke="#7fb3cc" stroke-width="1.200"/><path d="M3.500 6.500H9.500M6.500 3.500V9.500" stroke="#14597e" stroke-width="2"/></symbol>
<symbol id="zout" viewBox="0 0 18 18"><path d="M10 10L16 16" stroke="#999" stroke-width="2.500"/><circle cx="6.500" cy="6.500" r="5.300" fill="#e8f7fd" stroke="#7fb3cc" stroke-width="1.200"/><path d="M3.500 6.500H9.500" stroke="#14597e" stroke-width="2"/></symbol>
<symbol id="repaint" viewBox="0 0 18 18"><path d="M1.500 2.500H16.500V16H1.500Z" fill="url(#gb)" stroke="#999"/><path d="M16 5V16H7Z" fill="#2d7898"/><path d="M5 14Q7 10 15 4L9 13Z" fill="#fff"/></symbol>
<symbol id="shade" viewBox="0 0 18 18"><path d="M8 5L11 2H16V9L13 12H8Z" fill="url(#gg)"/><circle cx="9" cy="8" r="3" fill="#d5d8da"/><circle cx="6" cy="12" r="4" fill="url(#gg)"/><path d="M18 15V18H15Z" fill="#333"/></symbol>
<symbol id="cubev" viewBox="0 0 18 18"><path d="M1.500 5.500L5 2H16V12L12 16H1.500ZM1.500 5.500H12V16M12 5.500L16 2" fill="#dff4fc" stroke="#14597e" stroke-width="1.300"/><path d="M18 15V18H15Z" fill="#333"/></symbol>
<symbol id="saved" viewBox="0 0 18 18"><path d="M1 10L5 3L10 2V10L8 15H4Z" fill="#c8ecf8" stroke="#4f97b8"/><path d="M10 1L15.500 7V10H10Z" fill="#3f93bd"/><path d="M1 10H10" stroke="#2a7ba5"/><path d="M10.500 9.500H15.500V16.500H10.500Z" fill="#fff" stroke="#888"/><path d="M12 12H14M12 14H14" stroke="#666"/><path d="M18 15V18H15Z" fill="#333"/></symbol>
<symbol id="cam" viewBox="0 0 18 18"><path d="M2.500 1.500H13.500V15H2.500ZM2.500 5.500H13.500M2.500 9.500H8M6 1.500V15" fill="#fafafa" stroke="#999"/><path d="M7 10H10L11 8H14L15 10H17V17H7Z" fill="#333"/><circle cx="12" cy="13" r="2.300" fill="#777" stroke="#eee"/></symbol>
<symbol id="persp" viewBox="0 0 18 18"><path d="M2 6L7 2L16 3L15 12L11 16L2 12Z" fill="#c5e7f4" stroke="#8fb5c4"/><path d="M2 6L11 7V16M11 7L16 3M4 12L8 8L11 16" fill="none" stroke="#7aafc4"/></symbol>
<symbol id="clip" viewBox="0 0 18 18"><path d="M1.500 16V6L5 2H16V12L12 16Z" fill="#eef8fc" stroke="#999" stroke-dasharray="1 1"/><path d="M1.500 16V6L5 2H16Z" fill="#c5ecfa"/><path d="M1 16.500L16.500 1.500" stroke="#333"/><path d="M18 15V18H15Z" fill="#333"/></symbol>
<symbol id="datum" viewBox="0 0 18 18"><path d="M1 2L5 6M5 2L1 6M11 1L10 4M8 6L6 11M5 13L4 16M12 6V12H17M12 12L8 16" fill="none" stroke="#8c682c" stroke-width="1.600"/><path d="M18 15V18H15Z" fill="#333"/></symbol>
<symbol id="anno" viewBox="0 0 18 18"><path d="M1.500 1.500H11V7H1.500Z" fill="#fff3c8" stroke="#999"/><path d="M11 4H16V8M14 6L16 9L18 6" fill="none" stroke="#555"/><path d="M8 13.500Q12.500 9 17 13.500Q12.500 18 8 13.500Z" fill="#fff" stroke="#444" stroke-width="1.300"/><circle cx="12.500" cy="13.500" r="2" fill="#444"/></symbol>
<symbol id="spin" viewBox="0 0 18 18"><path d="M4 4L9 9L15 9M9 9L4 15" fill="none" stroke="#555" stroke-width="1.200"/><circle cx="4" cy="4" r="2.700" fill="#62ac52"/><circle cx="15" cy="9" r="2.700" fill="#dd6f66"/><circle cx="4" cy="14.500" r="2.700" fill="#3b80b0"/></symbol>
<symbol id="tri" viewBox="0 0 18 18"><path fill-rule="evenodd" d="M8 2L15 15H1.500ZM8 7L5 13H11Z" fill="#ccc" stroke="#aaa"/><circle cx="13" cy="12.500" r="3.500" fill="#eee" stroke="#aaa"/><path d="M12 11L15 12.500L12 14Z" fill="#999"/></symbol>
<symbol id="pause" viewBox="0 0 18 18"><path d="M4 3H7.500V14H4ZM10 3H13.500V14H10Z" fill="#999"/></symbol>
<symbol id="resume" viewBox="0 0 18 18"><path d="M1 3H17V14H6V12Q13 11 12 8Q11 6 8 7H1Z" fill="#c4c6c7"/><path d="M1 3H9V7H1Z" fill="#dfe0e1"/></symbol>
</svg>

<header class="titlebar d-flex align-items-center">
  <div class="caption-text position-absolute text-center"><h1>XZLT (活动的) C:\Users\Administrator\Downloads\xzlt.prt\xzlt.prt.2 - Creo Parametric</h1></div>
  <div class="d-flex align-items-center ps-2 pb-1 w-100">
    <svg class="i16 me-1"><use href="#cube"/></svg>
    <span class="logo">creo<sup>·</sup></span>
    <div class="quick d-flex align-items-center">
      <button class="btn tb" aria-label="新建"><svg class="i16"><use href="#newf"/></svg></button>
      <button class="btn tb" aria-label="打开"><svg class="i16"><use href="#open"/></svg></button>
      <button class="btn tb" aria-label="保存"><svg class="i16"><use href="#save"/></svg></button>
      <button class="btn tb" aria-label="撤消"><svg class="i16"><use href="#undo"/></svg><span class="cr"></span></button>
      <button class="btn tb" aria-label="重做" disabled><svg class="i16"><use href="#redo"/></svg><span class="cr"></span></button>
      <button class="btn tb" aria-label="重新生成"><svg class="i16"><use href="#regen"/></svg></button>
      <button class="btn tb" aria-label="窗口"><svg class="i16"><use href="#wins"/></svg><span class="cr"></span></button>
      <button class="btn tb" aria-label="关闭"><svg class="i16"><use href="#closew"/></svg></button>
      <span class="vsep align-self-stretch"></span>
      <button class="btn tb" aria-label="自定义"><span class="cr"></span></button>
    </div>
    <div class="ms-auto d-flex align-items-center gap-3 pe-2">
      <button class="btn tb" aria-label="最小化"><svg width="11" height="10"><path d="M1 8.500H10" stroke="#666" stroke-width="2"/></svg></button>
      <button class="btn tb" aria-label="最大化"><svg width="11" height="10"><path d="M.5 1.500H10.500V9.500H.5Z" fill="none" stroke="#666"/><path d="M0 2H11" stroke="#666" stroke-width="2"/></svg></button>
      <button class="btn tb" aria-label="关闭窗口"><svg width="11" height="10"><path d="M1.500 1L9.500 9M9.500 1L1.500 9" stroke="#666" stroke-width="2"/></svg></button>
    </div>
  </div>
</header>

<nav class="tabs d-flex">
  <button class="tabbtn filetab">文件</button><button class="tabbtn current">模型</button><button class="tabbtn">分析</button><button class="tabbtn">实时仿真</button><button class="tabbtn">注释</button><button class="tabbtn">工具</button><button class="tabbtn">视图</button><button class="tabbtn">柔性建模</button><button class="tabbtn">应用程序</button>
  <div class="tabtools ms-auto d-flex align-items-center gap-2">
    <button class="btn tb me-1" aria-label="收起功能区"><svg width="12" height="8"><path d="M1 7L6 1.500L11 7H8L6 5L4 7Z" fill="#fff"/></svg></button>
    <button class="btn tb me-1" aria-label="搜索"><svg width="12" height="12"><circle cx="7" cy="4.500" r="3.300" fill="none" stroke="#fff" stroke-width="1.500"/><path d="M5 7L1 11" stroke="#fff" stroke-width="2"/></svg></button>
    <button class="btn tb gap-2" aria-label="学习"><svg width="13" height="12"><path d="M0 4L6.500 1L13 4L6.500 7ZM3 6.500L6.500 8L10 6.500V9.500L6.500 11L3 9.500Z" fill="#fff"/></svg><span class="cr"></span></button>
    <button class="btn tb text-white fw-bold ps-1" aria-label="帮助">?</button>
  </div>
</nav>

<section class="ribbon d-flex" aria-label="功能区">
  <div class="rgroup"><div class="cols">
    <button class="btn tb big"><svg class="i32"><use href="#regen"/></svg><span class="lbl">重新生成</span><span class="cr"></span></button>
    <div class="rcol"><button class="btn tb"><svg class="i16"><use href="#copy"/></svg>复制</button><button class="btn tb" disabled><svg class="i16"><use href="#paste"/></svg>粘贴<span class="cr"></span></button><button class="btn tb"><svg class="i16"><use href="#del"/></svg>删除<span class="cr"></span></button></div>
  </div><button class="btn tb glabel">操作<span class="cr"></span></button></div>

  <div class="rgroup"><div class="cols">
    <div class="rcol"><button class="btn tb"><svg class="i16"><use href="#udf"/></svg>用户定义特征</button><button class="btn tb"><svg class="i16"><use href="#cpgeo"/></svg>复制几何</button><button class="btn tb"><svg class="i16"><use href="#shrink"/></svg>收缩包络</button></div>
  </div><button class="btn tb glabel">获取数据<span class="cr"></span></button></div>

  <div class="rgroup"><div class="cols">
    <div class="rcol"><button class="btn tb"><svg class="i16"><use href="#boolb"/></svg>布尔运算</button><button class="btn tb"><svg class="i16"><use href="#split"/></svg>分割/修剪主体</button><button class="btn tb"><svg class="i16"><use href="#nbody"/></svg>新建主体</button></div>
  </div><button class="btn tb glabel">主体<span class="cr"></span></button></div>

  <div class="rgroup"><div class="cols">
    <button class="btn tb big"><svg class="i32"><use href="#plane32"/></svg><span class="lbl">平面</span></button>
    <div class="rcol"><button class="btn tb"><svg class="i16"><use href="#axis"/></svg>轴</button><button class="btn tb"><svg class="i16"><use href="#point"/></svg>点<span class="cr"></span></button><button class="btn tb"><svg class="i16"><use href="#csys"/></svg>坐标系</button></div>
    <button class="btn tb big"><svg class="i32"><use href="#sketch32"/></svg><span class="lbl">草绘</span></button>
  </div><button class="btn tb glabel">基准<span class="cr"></span></button></div>

  <div class="rgroup"><div class="cols">
    <div class="rcol"><button class="btn tb"><svg class="i16"><use href="#legacy"/></svg>旧版</button></div>
    <button class="btn tb big"><svg class="i32"><use href="#extr"/></svg><span class="lbl">拉伸</span></button>
    <div class="rcol"><button class="btn tb"><svg class="i16"><use href="#revolve"/></svg>旋转</button><button class="btn tb"><svg class="i16"><use href="#sweep"/></svg>扫描<span class="cr"></span></button><button class="btn tb"><svg class="i16"><use href="#swbl"/></svg>扫描混合</button></div>
  </div><button class="btn tb glabel">形状<span class="cr"></span></button></div>

  <div class="rgroup"><div class="cols">
    <div class="rcol"><button class="btn tb"><svg class="i16"><use href="#hole"/></svg>孔</button><button class="btn tb"><svg class="i16"><use href="#round"/></svg>倒圆角<span class="cr"></span></button><button class="btn tb"><svg class="i16"><use href="#chamfer"/></svg>倒角<span class="cr"></span></button></div>
    <div class="rcol"><button class="btn tb"><svg class="i16"><use href="#draft"/></svg>拔模<span class="cr"></span></button><button class="btn tb"><svg class="i16"><use href="#shell"/></svg>壳</button><button class="btn tb"><svg class="i16"><use href="#rib"/></svg>筋<span class="cr"></span></button></div>
  </div><button class="btn tb glabel">工程<span class="cr"></span></button></div>

  <div class="rgroup"><div class="cols">
    <button class="btn tb big"><svg class="i32"><use href="#patt"/></svg><span class="lbl">阵列</span><span class="cr"></span></button>
    <div class="rcol"><button class="btn tb"><svg class="i16"><use href="#mirror"/></svg>镜像</button><button class="btn tb"><svg class="i16"><use href="#trim"/></svg>修剪</button><button class="btn tb"><svg class="i16"><use href="#merge"/></svg>合并</button></div>
    <div class="rcol"><button class="btn tb" disabled><svg class="i16"><use href="#extend"/></svg>延伸</button><button class="btn tb" disabled><svg class="i16"><use href="#offs"/></svg>偏移</button><button class="btn tb"><svg class="i16"><use href="#inter"/></svg>相交</button></div>
    <div class="rcol"><button class="btn tb"><svg class="i16"><use href="#proj"/></svg>投影</button><button class="btn tb"><svg class="i16"><use href="#thick"/></svg>加厚</button><button class="btn tb"><svg class="i16"><use href="#solid"/></svg>实体化</button></div>
    <div class="rcol"><button class="btn tb"><svg class="i16"><use href="#remv"/></svg>移除</button><button class="btn tb"><svg class="i16"><use href="#divd"/></svg>分割<span class="cr"></span></button><button class="btn tb"><svg class="i16"><use href="#unify"/></svg>一体化曲面</button></div>
  </div><button class="btn tb glabel">编辑<span class="cr"></span></button></div>

  <div class="rgroup"><div class="cols">
    <button class="btn tb big"><svg class="i32"><use href="#bound"/></svg><span class="lbl">边界混合</span></button>
    <div class="rcol"><button class="btn tb"><svg class="i16"><use href="#fillp"/></svg>填充</button><button class="btn tb"><svg class="i16"><use href="#style"/></svg>样式</button><button class="btn tb"><svg class="i16"><use href="#free"/></svg>自由式</button></div>
  </div><button class="btn tb glabel">曲面<span class="cr"></span></button></div>

  <div class="rgroup"><div class="cols justify-content-center">
    <button class="btn tb big"><svg class="i32"><use href="#comp"/></svg><span class="lbl">元件界面</span></button>
  </div><button class="btn tb glabel px-1">模型意图<span class="cr"></span></button></div>
</section>

<main class="work d-flex flex-fill position-relative">
  <aside class="side d-flex flex-column">
    <div class="sidetabs d-flex">
      <button class="btn tb on" aria-label="模型树"><svg class="i16"><use href="#ttree"/></svg></button>
      <button class="btn tb" aria-label="文件夹"><svg class="i16"><use href="#folders"/></svg></button>
    </div>
    <div class="tools d-flex align-items-center ps-2 pe-2">
      <button class="btn tb ps-1" aria-label="展开"><svg width="10" height="8"><path d="M0 0H10L5 8Z" fill="#888"/></svg></button>
      <svg class="i16 ms-1"><use href="#gcube"/></svg>
      <svg class="i16 me-3"><use href="#dots"/></svg>
      <button class="btn tb me-2" aria-label="全部展开"><svg class="i16"><use href="#lst"/></svg></button>
      <button class="btn tb" aria-label="全部折叠"><svg class="i16"><use href="#lst2"/></svg></button>
      <button class="btn tb on24 ms-1 me-1" aria-label="树列"><svg class="i16"><use href="#tcols"/></svg></button>
      <span class="vsep align-self-stretch my-1 me-2"></span>
      <button class="btn tb me-2" aria-label="新建项"><svg class="i16"><use href="#newd"/></svg></button>
      <span class="vsep align-self-stretch my-1 me-2"></span>
      <button class="btn tb me-2" aria-label="树过滤器"><svg class="i16"><use href="#tfil"/></svg></button>
      <button class="btn tb me-2" aria-label="树设置"><svg class="i16"><use href="#tset"/></svg></button>
      <button class="btn tb me-2" aria-label="更多"><svg width="9" height="8"><path d="M1 1L4 4L1 7M5 1L8 4L5 7" fill="none" stroke="#333" stroke-width="1.300"/></svg></button>
      <button class="btn tb" aria-label="显示"><svg width="18" height="18"><use href="#docl"/></svg></button>
    </div>
    <div class="d-flex align-items-center">
      <svg class="i16 ms-auto"><use href="#funnel"/></svg>
      <div class="findbox d-flex align-items-center ms-1"><input class="flex-fill" type="text" aria-label="搜索模型树"><button class="btn tb pe-1" aria-label="清除"><svg width="10" height="10"><path d="M1 1L9 9M9 1L1 9" stroke="#999" stroke-width="1.300"/></svg></button></div>
      <button class="btn tb px-1 ms-1" aria-label="搜索选项"><span class="cr"></span></button>
      <button class="btn tb ms-1 me-2 pe-1" aria-label="添加"><svg width="12" height="12"><path d="M6 0V12M0 6H12" stroke="#999" stroke-width="3"/></svg></button>
    </div>
    <ul class="tree modeltree flex-fill overflow-hidden">
      <li class="top"><svg class="i16"><use href="#cube"/></svg><span class="txt">XZLT.PRT</span></li>
      <li><span class="gd"><svg><use href="#ex"/></svg></span><svg class="i16"><use href="#ditem"/></svg><span class="txt">设计项</span></li>
      <li><span class="gd st"></span><svg class="i16"><use href="#pl"/></svg><span class="txt">RIGHT</span></li>
      <li><span class="gd st"></span><svg class="i16"><use href="#pl"/></svg><span class="txt">TOP</span></li>
      <li><span class="gd st"></span><svg class="i16"><use href="#pl"/></svg><span class="txt">FRONT</span></li>
      <li><span class="gd st"></span><svg class="i16"><use href="#csys"/></svg><span class="txt">PRT_CSYS_DEF</span></li>
      <li><span class="gd"><svg><use href="#ex"/></svg></span><svg class="i16"><use href="#extr"/></svg><span class="txt">拉伸 1</span></li>
      <li><span class="gd st"></span><svg class="i16"><use href="#pl"/></svg><span class="txt">DTM1</span><span class="pick"></span></li>
      <li><span class="gd"><svg><use href="#exd"/></svg></span><svg class="i16"><use href="#extr"/></svg><span class="txt">拉伸 2</span></li>
      <li><span class="gd me-1"></span><span class="gd half"></span><svg class="i16"><use href="#sec"/></svg><span class="txt">截面 1</span></li>
      <li class="insert"><svg><path d="M0 3.500H2000" stroke="#59c13c" stroke-width="2"/><path d="M0 0L4 3.500L0 7Z" fill="#59c13c"/><svg x="100%" overflow="visible"><path d="M0 0L-4 3.500L0 7Z" fill="#59c13c"/></svg></svg></li>
    </ul>
    <div class="layers d-flex flex-column">
      <div class="tools d-flex align-items-center">
        <button class="btn tb ps-1" aria-label="展开层"><svg width="12" height="8"><path d="M1 0H11L6 8Z" fill="#888"/></svg></button>
        <svg class="i16 ms-1"><use href="#glay"/></svg>
        <svg class="i16 me-3"><use href="#dots"/></svg>
        <button class="btn tb me-2" aria-label="全部展开"><svg class="i16"><use href="#lst"/></svg></button>
        <button class="btn tb me-2" aria-label="全部折叠"><svg class="i16"><use href="#lst2"/></svg></button>
        <span class="vsep align-self-stretch my-1 me-1"></span>
        <button class="btn tb on24" aria-label="显示层"><svg class="i16"><use href="#layeye"/></svg></button>
        <button class="btn tb on24" aria-label="隐藏项"><svg class="i16"><use href="#laycube"/></svg></button>
        <button class="btn tb on24 me-2" aria-label="隔离层"><svg class="i16"><use href="#layiso"/></svg></button>
        <button class="btn tb me-2" aria-label="更多"><svg width="9" height="8"><path d="M1 1L4 4L1 7M5 1L8 4L5 7" fill="none" stroke="#333" stroke-width="1.300"/></svg></button>
        <button class="btn tb me-2" aria-label="层设置"><svg width="18" height="18"><use href="#layset"/></svg></button>
        <button class="btn tb" aria-label="层显示"><svg width="18" height="18"><use href="#docl"/></svg></button>
      </div>
      <div class="combo d-flex flex-shrink-0">
        <span class="arrow d-flex align-items-center ps-1"><svg class="i16"><use href="#arr"/></svg></span>
        <select class="flex-fill" aria-label="活动层对象" disabled><option>XZLT.PRT</option></select>
        <span class="drop d-flex align-items-center ps-1"><svg width="8" height="5"><path d="M0 0H7L3.500 4Z" fill="#999"/></svg></span>
      </div>
      <div class="layerlist d-flex flex-fill">
        <ul class="tree short flex-fill overflow-hidden">
          <li class="top"><svg class="i16"><use href="#lay"/></svg><span class="txt">层</span></li>
          <li><span class="gd st"></span><svg class="i16"><use href="#lph"/></svg><span class="txt hid">隐藏的项</span></li>
          <li><span class="gd"><svg><use href="#ex"/></svg></span><svg class="i16"><use href="#lp"/></svg><span class="txt">显示的项</span></li>
          <li><span class="gd"><svg><use href="#ex"/></svg></span><svg class="i16"><use href="#lc"/></svg><span class="txt">01___PRT_ALL_DTM_PLN</span></li>
          <li><span class="gd"><svg><use href="#ex"/></svg></span><svg class="i16"><use href="#lp"/></svg><span class="txt">01___PRT_DEF_DTM_PLN</span></li>
          <li><span class="gd"><svg><use href="#ex"/></svg></span><svg class="i16"><use href="#lc"/></svg><span class="txt">02___PRT_ALL_AXES</span></li>
          <li><span class="gd st"></span><svg class="i16"><use href="#lc"/></svg><span class="txt">03___PRT_ALL_CURVES</span></li>
          <li><span class="gd st"></span><svg class="i16"><use href="#lc"/></svg><span class="txt">04___PRT_ALL_DTM_PNT</span></li>
          <li><span class="gd"><svg><use href="#ex"/></svg></span><svg class="i16"><use href="#lc"/></svg><span class="txt">05___PRT_ALL_DTM_CSYS</span></li>
        </ul>
        <div class="sbar d-flex flex-column">
          <div class="end d-flex align-items-center justify-content-center"><svg width="8" height="5"><path d="M0 5H8L4 0Z" fill="#999"/></svg></div>
          <div class="thumb"></div>
          <div class="end mt-auto d-flex align-items-center justify-content-center"><svg width="8" height="5"><path d="M0 0H8L4 5Z" fill="#999"/></svg></div>
        </div>
      </div>
    </div>
  </aside>

  <section class="flex-fill position-relative overflow-hidden" aria-label="图形窗口">
    <svg class="model position-absolute w-100 h-100" viewBox="281 168 1056 800" preserveAspectRatio="xMinYMin slice">
      <path d="M357.500 968V362.500H1316.500V968" fill="#f0e9e2" stroke="#99622f"/>
      <g shape-rendering="crispEdges">
        <path fill-rule="evenodd" fill="#a1aebd" stroke="#111" d="M367.500 685.500a313 313 0 0 1 626 0a313 313 0 0 1-626 0ZM445.500 685.500a235 235 0 0 0 470 0a235 235 0 0 0-470 0Z"/>
        <path fill="#a1affd" stroke="#111" d="M978.500 588.500L1276 492Q1306 590 1306.500 685.500H993.500A313 313 0 0 0 978.500 588.500Z"/>
      </g>
      <path d="M357.500 685.500H1316.500M680.500 362.500V968" stroke="#99622f"/>
      <path d="M367.500 685.500H445.500M915.500 685.500H1306.500" stroke="#4b4337"/>
      <path d="M680.500 653V685" stroke="#3cf03c" stroke-dasharray="4 3"/>
      <path d="M678 665L680.500 658L683 665Z" fill="#2ee62e"/>
      <path d="M701 683.500H707V687.500H701Z" fill="#e62a2a"/>
      <path d="M837 661V685" stroke="#2ee62e" stroke-width="1.500"/><path d="M837 685.500H860" stroke="#f33"/>
      <circle cx="837" cy="661.500" r="2" fill="#2ee62e"/><circle cx="861" cy="685.500" r="2" fill="#f33"/><circle cx="837" cy="685.500" r="3" fill="#3ff"/>
      <text x="683" y="684" fill="#3ff">Z</text>
      <g fill="#99622f">
        <text x="357" y="363">FRONT</text><text x="357" y="363">DTM1</text><text x="1316" y="686">TOP</text>
        <text x="681" y="699">PRT_CSYS_DEF</text>
        <text x="681" y="685">A_1</text>
      </g>
      <text x="681" y="650" fill="#3cf03c">Y</text><text x="716" y="684" fill="#f33">X</text>
      <text class="mark-cn" x="1151" y="938" fill="#ff6633">野火</text>
      <text class="mark-cn" x="1236" y="938" fill="#000">论坛</text>
      <path d="M1219 883Q1235 896 1232 910Q1229 922 1218 924L1216 920Q1224 914 1224 906Q1224 899 1217 891Q1224 895 1226 901Q1228 893 1219 883Z" fill="#f63"/>
      <text class="mark-url" x="1153" y="957" fill="#999">www.proewildfire.cn</text>
    </svg>
    <div class="viewbar position-absolute d-flex" role="toolbar" aria-label="视图工具">
      <button class="btn tb" aria-label="重新调整"><svg width="18" height="18"><use href="#zfit"/></svg></button>
      <button class="btn tb" aria-label="放大"><svg width="18" height="18"><use href="#zin"/></svg></button>
      <button class="btn tb" aria-label="缩小"><svg width="18" height="18"><use href="#zout"/></svg></button>
      <button class="btn tb" aria-label="重画"><svg width="18" height="18"><use href="#repaint"/></svg></button>
      <button class="btn tb" aria-label="渲染"><svg width="18" height="18"><use href="#shade"/></svg></button>
      <button class="btn tb" aria-label="显示样式"><svg width="18" height="18"><use href="#cubev"/></svg></button>
      <button class="btn tb" aria-label="已保存方向"><svg width="18" height="18"><use href="#saved"/></svg></button>
      <button class="btn tb" aria-label="视图管理器"><svg width="18" height="18"><use href="#cam"/></svg></button>
      <button class="btn tb" aria-label="透视图"><svg width="18" height="18"><use href="#persp"/></svg></button>
      <button class="btn tb" aria-label="截面"><svg width="18" height="18"><use href="#clip"/></svg></button>
      <button class="btn tb" aria-label="基准显示"><svg width="18" height="18"><use href="#datum"/></svg></button>
      <button class="btn tb on24" aria-label="注释显示"><svg width="18" height="18"><use href="#anno"/></svg></button>
      <button class="btn tb on24" aria-label="旋转中心"><svg width="18" height="18"><use href="#spin"/></svg></button>
      <button class="btn tb" aria-label="仿真"><svg width="18" height="18"><use href="#tri"/></svg></button>
      <button class="btn tb" aria-label="暂停"><svg width="18" height="18"><use href="#pause"/></svg></button>
      <button class="btn tb" aria-label="继续"><svg width="18" height="18"><use href="#resume"/></svg></button>
    </div>
  </section>
  <div class="note position-absolute">
    <div>将<span>DTM1</span>拖入移动到拉伸<span>2</span>中，这样<span>DTM1</span>的</div>
    <div>偏移值就成为了拉伸<span>2</span>的一个相关联的部份</div>
  </div>
</main>
<script src="https://cdn.jsdelivr.net/npm/bootstrap@5.3.0/dist/js/bootstrap.bundle.min.js"></script>
</body>
</html>
